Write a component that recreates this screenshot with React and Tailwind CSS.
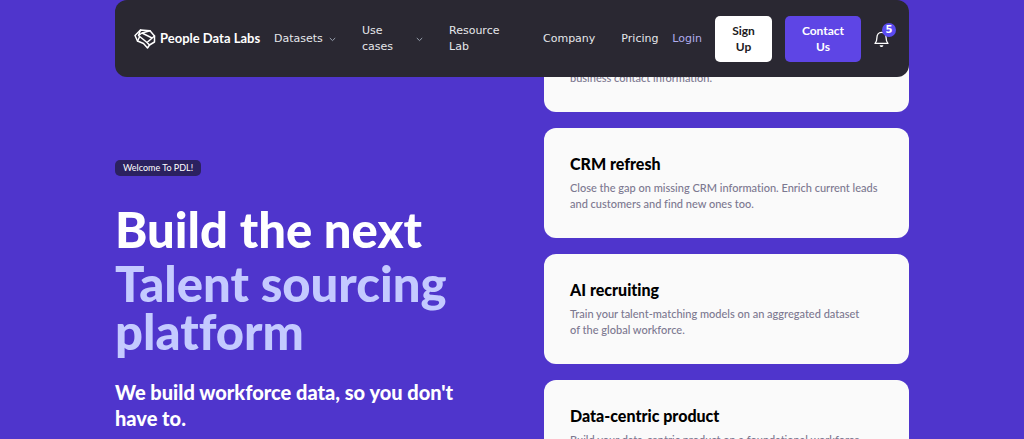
import React from 'react';

const navLinks = [
    { label: 'Datasets', menu: true, width: 'w-[50px]' },
    { label: 'Use cases', menu: true, width: 'w-[49px]' },
    { label: 'Resource Lab', menu: false, width: 'w-[68px]' },
    { label: 'Company', menu: false, width: 'w-auto' },
    { label: 'Pricing', menu: false, width: 'w-auto' },
];

const useCases = [
    { id: 'contact', text: 'business contact information.' },
    { id: 'crm', title: 'CRM refresh', text: 'Close the gap on missing CRM information. Enrich current leads and customers and find new ones too.' },
    { id: 'recruiting', title: 'AI recruiting', text: 'Train your talent-matching models on an aggregated dataset of\u00a0the global workforce.' },
    { id: 'product', title: 'Data-centric product', text: 'Build your data-centric product on a foundational workforce dataset.' },
];

const Logo = () => (
    <a href="#" className="flex shrink-0 items-center gap-1 font-['Lato',sans-serif] text-[13px] font-bold whitespace-nowrap text-white">
        <svg width="22" height="20" viewBox="0 0 22 20" fill="none" stroke="currentColor" strokeWidth="1.5" strokeLinejoin="round" strokeLinecap="round" aria-hidden="true">
            <path d="M6.500 1 16 1.800 20.500 7v6L15.500 16 13.500 19 9.500 14.500 3.500 12 1 6.500Z" />
            <path d="M6.500 1 4.500 6.500 13 13.500 20.500 7M16 1.800 8 4 4.500 6.500M8 4l10 5M13 13.500l2.500 2.500M3.500 12l2-4" />
        </svg>
        <span>People Data Labs</span>
    </a>
);

const Chevron = () => (
    <svg className="shrink-0 text-gray-400" width="7" height="5" viewBox="0 0 7 5" fill="none" stroke="currentColor" aria-hidden="true">
        <path d="m.8 1 2.700 2.600L6.200 1" />
    </svg>
);

const Bell = () => (
    <svg width="15" height="17" viewBox="0 0 15 17" fill="none" stroke="currentColor" strokeWidth="1.3" strokeLinejoin="round" aria-hidden="true">
        <path d="M1 12.400c1.500-1.400 1.900-2.800 1.900-5.600C2.900 3.600 4.600 1.400 7.500 1.400s4.600 2.200 4.600 5.400c0 2.800.4 4.200 1.900 5.600Z" />
        <path d="M5.700 14.300h3.600c0 1.100-.8 1.800-1.800 1.800s-1.800-.7-1.800-1.800Z" fill="currentColor" stroke="none" />
    </svg>
);

const Header = () => (
    <header className="fixed inset-x-0 top-0 z-10 px-[115px]">
        <div className="flex items-center justify-between rounded-xl bg-[#2a2832] pt-4 pr-5 pb-[15px] pl-[19px]">
            <Logo />
            <nav className="flex items-center gap-[26px] text-[11px] leading-4 text-gray-200">
                {navLinks.map(link => (
                    <a key={link.label} href="#" className="flex items-center gap-[5px]">
                        <span className={link.width}>{link.label}</span>
                        {link.menu && <Chevron />}
                    </a>
                ))}
            </nav>
            <div className="flex items-center gap-[13px] text-[11px] leading-4">
                <a href="#" className="text-[#b0adee]">Login</a>
                <button className="w-[57px] rounded-[5px] bg-white px-3 py-[7px] font-['Lato',sans-serif] text-xs leading-4 font-bold text-[#1c1a22]">Sign Up</button>
                <button className="w-[76px] rounded-[5px] bg-[#5e45e5] px-4 py-[7px] font-['Lato',sans-serif] text-xs leading-4 font-bold text-white">Contact Us</button>
                <button className="relative text-white" aria-label="Notifications">
                    <Bell />
                    <span className="absolute -top-2 left-2 flex size-3.5 items-center justify-center rounded-full bg-[#5a4bf0] text-[10px] leading-3 font-bold">5</span>
                </button>
            </div>
        </div>
    </header>
);

const UseCaseCard = ({ title, text }) => (
    <article className="flex min-h-[110px] flex-col justify-end rounded-xl bg-[#fafafa] px-[26px] pb-[26px]">
        {title && <h3 className="text-base leading-5 font-black text-black">{title}</h3>}
        <p className="mt-1.5 text-[11px] leading-4 font-medium text-[#7c7890]">{text}</p>
    </article>
);

const App = () => {
    return (
        <div className="h-screen overflow-hidden bg-[#4f35cc] font-['DejaVu_Sans',sans-serif]">
            <Header />
            <main className="grid grid-cols-2 gap-16 px-[115px] font-['Lato',sans-serif] [font-variant-ligatures:none]">
                <section className="pt-40">
                    <span className="block w-fit rounded-[5px] bg-[#2b2160] px-2 text-[9px] leading-4 text-white">Welcome To PDL!</span>
                    <h1 className="mt-[29px] text-[49px] leading-12 font-black text-white">
                        Build the next
                        <span className="mt-1.5 block text-[#c4caff]">Talent sourcing platform</span>
                    </h1>
                    <p className="mt-6 text-xl leading-[26px] font-black text-white">We build workforce data, so you don't have to.</p>
                </section>
                <section className="flex flex-col gap-4 pt-0.5">
                    {useCases.map(item => (
                        <UseCaseCard key={item.id} title={item.title} text={item.text} />
                    ))}
                </section>
            </main>
        </div>
    );
};

export default App;
